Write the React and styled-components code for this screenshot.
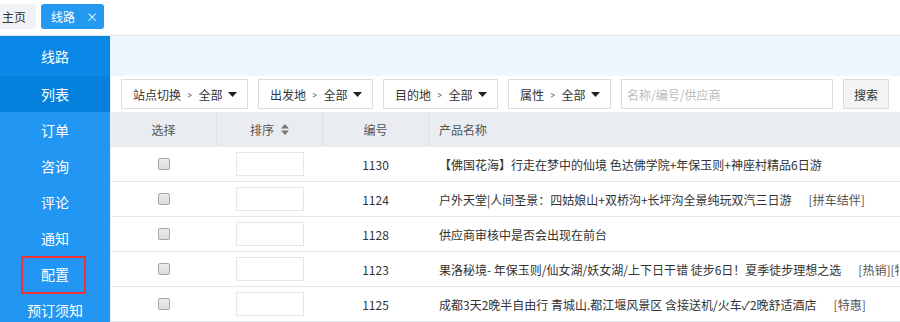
import React from 'react';
import styled, { createGlobalStyle } from 'styled-components';

const C = {
    blue: '#2196f3', blueDark: '#0a88e8', blueActive: '#0580dc',
    strip: '#eef6fe', border: '#dde4ec', head: '#e9ecf1',
    text: '#333', muted: '#555', line: '#e4e7eb', red: '#f03232',
};

const Global = createGlobalStyle`
    html, body { margin: 0; padding: 0; background: #fff; overflow: hidden; }
    body { font-family: "Noto Sans CJK SC", "Noto Sans", sans-serif; font-size: 12px; color: ${C.text}; }
    * { box-sizing: border-box; }
`;

const Page = styled.div`
    width: 900px;
    height: 322px;
    overflow: hidden;
`;

const TabBar = styled.div`
    height: 36px;
    border-bottom: 1px solid ${C.border};
    display: flex;
    align-items: center;
    gap: 5px;
    margin-left: -8px;
    padding-bottom: 2px;
`;

const Tab = styled.div`
    height: 25px;
    display: flex;
    align-items: center;
    gap: 11px;
    padding: ${({ active }) => (active ? '0 6px 0 10px' : '0 10px 0 10px')};
    border-radius: 3px;
    background: ${({ active }) => (active ? '#2499f0' : '#f0f2f5')};
    color: ${({ active }) => (active ? '#fff' : C.text)};
    font-size: 12px;
`;

const Close = styled.span`
    font-size: 12px;
    line-height: 1;
    opacity: 0.9;
`;

const Body = styled.div`
    display: flex;
    height: 286px;
`;

const Sidebar = styled.nav`
    width: 110px;
    flex-shrink: 0;
    background: ${C.blue};
    display: flex;
    flex-direction: column;
`;

const NavItem = styled.div`
    height: ${({ head }) => (head ? '40px' : '36px')};
    flex-shrink: 0;
    display: flex;
    align-items: center;
    justify-content: center;
    background: ${({ head, active }) => (head ? C.blueDark : active ? C.blueActive : 'transparent')};
    color: #fff;
    font-size: 14px;
`;

const Marked = styled.span`
    position: relative;
    line-height: 18px;
    &::after {
        content: '';
        position: absolute;
        left: -20px;
        right: -17px;
        top: -9px;
        bottom: -11px;
        border: 2px solid ${C.red};
    }
`;

const Main = styled.div`
    flex: 1;
    min-width: 0;
    border-left: 1px solid #e8eef5;
    display: flex;
    flex-direction: column;
`;

const Strip = styled.div`
    height: 40px;
    background: ${C.strip};
`;

const Filters = styled.div`
    height: 36px;
    display: flex;
    align-items: center;
    gap: 10px;
    padding: 0 10px;
`;

const Drop = styled.div`
    height: 30px;
    width: ${({ w }) => w}px;
    flex-shrink: 0;
    border: 1px solid #dcdcdc;
    display: flex;
    align-items: center;
    padding: 0 10px 0 11px;
    color: ${C.text};
    white-space: nowrap;
`;

const Sep = styled.span`
    font-size: 10px;
    color: #555;
    margin: 0 6px 0 6px;
    transform: scaleX(0.8);
`;

const Caret = styled.svg`
    margin-left: auto;
`;

const Search = styled.input`
    width: 212px;
    height: 30px;
    border: 1px solid #dcdcdc;
    padding: 0 5px;
    font-family: inherit;
    font-size: 12px;
    outline: none;
    &::placeholder { color: #bbb; }
`;

const Btn = styled.button`
    width: 46px;
    height: 30px;
    border: 1px solid #dcdcdc;
    background: #f4f4f4;
    font-family: inherit;
    font-size: 12px;
    color: ${C.text};
    padding: 0;
`;

const Row = styled.div`
    display: grid;
    grid-template-columns: 106px 106px 106px 1fr;
    height: 35px;
    border-bottom: 1px solid ${({ head }) => (head ? 'transparent' : C.line)};
    background: ${({ head }) => (head ? C.head : '#fff')};
    color: ${({ head }) => (head ? C.muted : C.text)};
`;

const Cell = styled.div`
    display: flex;
    align-items: center;
    justify-content: ${({ left }) => (left ? 'flex-start' : 'center')};
    padding-left: ${({ left }) => (left ? '10px' : '0')};
    border-right: 1px solid ${({ divider }) => (divider ? '#dde0e5' : 'transparent')};
    white-space: nowrap;
    overflow: hidden;
    gap: 7px;
`;

const Check = styled.span`
    width: 12px;
    height: 12px;
    border: 1px solid #a6a6a6;
    border-radius: 2px;
    background: linear-gradient(#ececec, #dcdcdc);
`;

const SortBox = styled.div`
    width: 68px;
    height: 24px;
    border: 1px solid #e6e6e6;
    background: #fff;
`;

const Tag = styled.span`
    color: #555;
    margin-left: 10px;
`;

const navItems = ['订单', '咨询', '评论', '通知', '配置', '预订须知'];

const rows = [
    { id: 1130, name: '【佛国花海】行走在梦中的仙境 色达佛学院+年保玉则+神座村精品6日游' },
    { id: 1124, name: '户外天堂|人间圣景：四姑娘山+双桥沟+长坪沟全景纯玩双汽三日游', tag: '[拼车结伴]' },
    { id: 1128, name: '供应商审核中是否会出现在前台' },
    { id: 1123, name: '果洛秘境- 年保玉则/仙女湖/妖女湖/上下日干错 徒步6日！夏季徒步理想之选', tag: '[热销][特惠]' },
    { id: 1125, name: '成都3天2晚半自由行 青城山.都江堰风景区 含接送机/火车✓2晚舒适酒店', tag: '[特惠]' },
];

const filters = [
    { label: '站点切换', w: 127 },
    { label: '出发地', w: 115 },
    { label: '目的地', w: 115 },
    { label: '属性', w: 103 },
];

function CaretIcon() {
    return (
        <Caret width="9" height="5" viewBox="0 0 9 5">
            <path d="M0 0h9L4.5 5z" fill="#222" />
        </Caret>
    );
}

function SortIcon() {
    return (
        <svg width="8" height="11" viewBox="0 0 8 11">
            <path d="M4 0l4 4.5H0z M0 6.5h8L4 11z" fill="#777" />
        </svg>
    );
}

export default function App() {
    return (
        <Page>
            <Global />
            <TabBar>
                <Tab>主页</Tab>
                <Tab active>线路<Close>×</Close></Tab>
            </TabBar>
            <Body>
                <Sidebar>
                    <NavItem head>线路</NavItem>
                    <NavItem active>列表</NavItem>
                    {navItems.map((n) => (
                        <NavItem key={n}>{n === '配置' ? <Marked>{n}</Marked> : n}</NavItem>
                    ))}
                </Sidebar>
                <Main>
                    <Strip />
                    <Filters>
                        {filters.map((f) => (
                            <Drop key={f.label} w={f.w}>
                                {f.label}<Sep>&gt;</Sep>全部
                                <CaretIcon />
                            </Drop>
                        ))}
                        <Search placeholder="名称/编号/供应商" />
                        <Btn>搜索</Btn>
                    </Filters>
                    <Row head>
                        <Cell divider>选择</Cell>
                        <Cell divider>排序 <SortIcon /></Cell>
                        <Cell divider>编号</Cell>
                        <Cell left>产品名称</Cell>
                    </Row>
                    {rows.map((r) => (
                        <Row key={r.id}>
                            <Cell><Check /></Cell>
                            <Cell><SortBox /></Cell>
                            <Cell>{r.id}</Cell>
                            <Cell left>
                                {r.name}
                                {r.tag && <Tag>{r.tag}</Tag>}
                            </Cell>
                        </Row>
                    ))}
                </Main>
            </Body>
        </Page>
    );
}
